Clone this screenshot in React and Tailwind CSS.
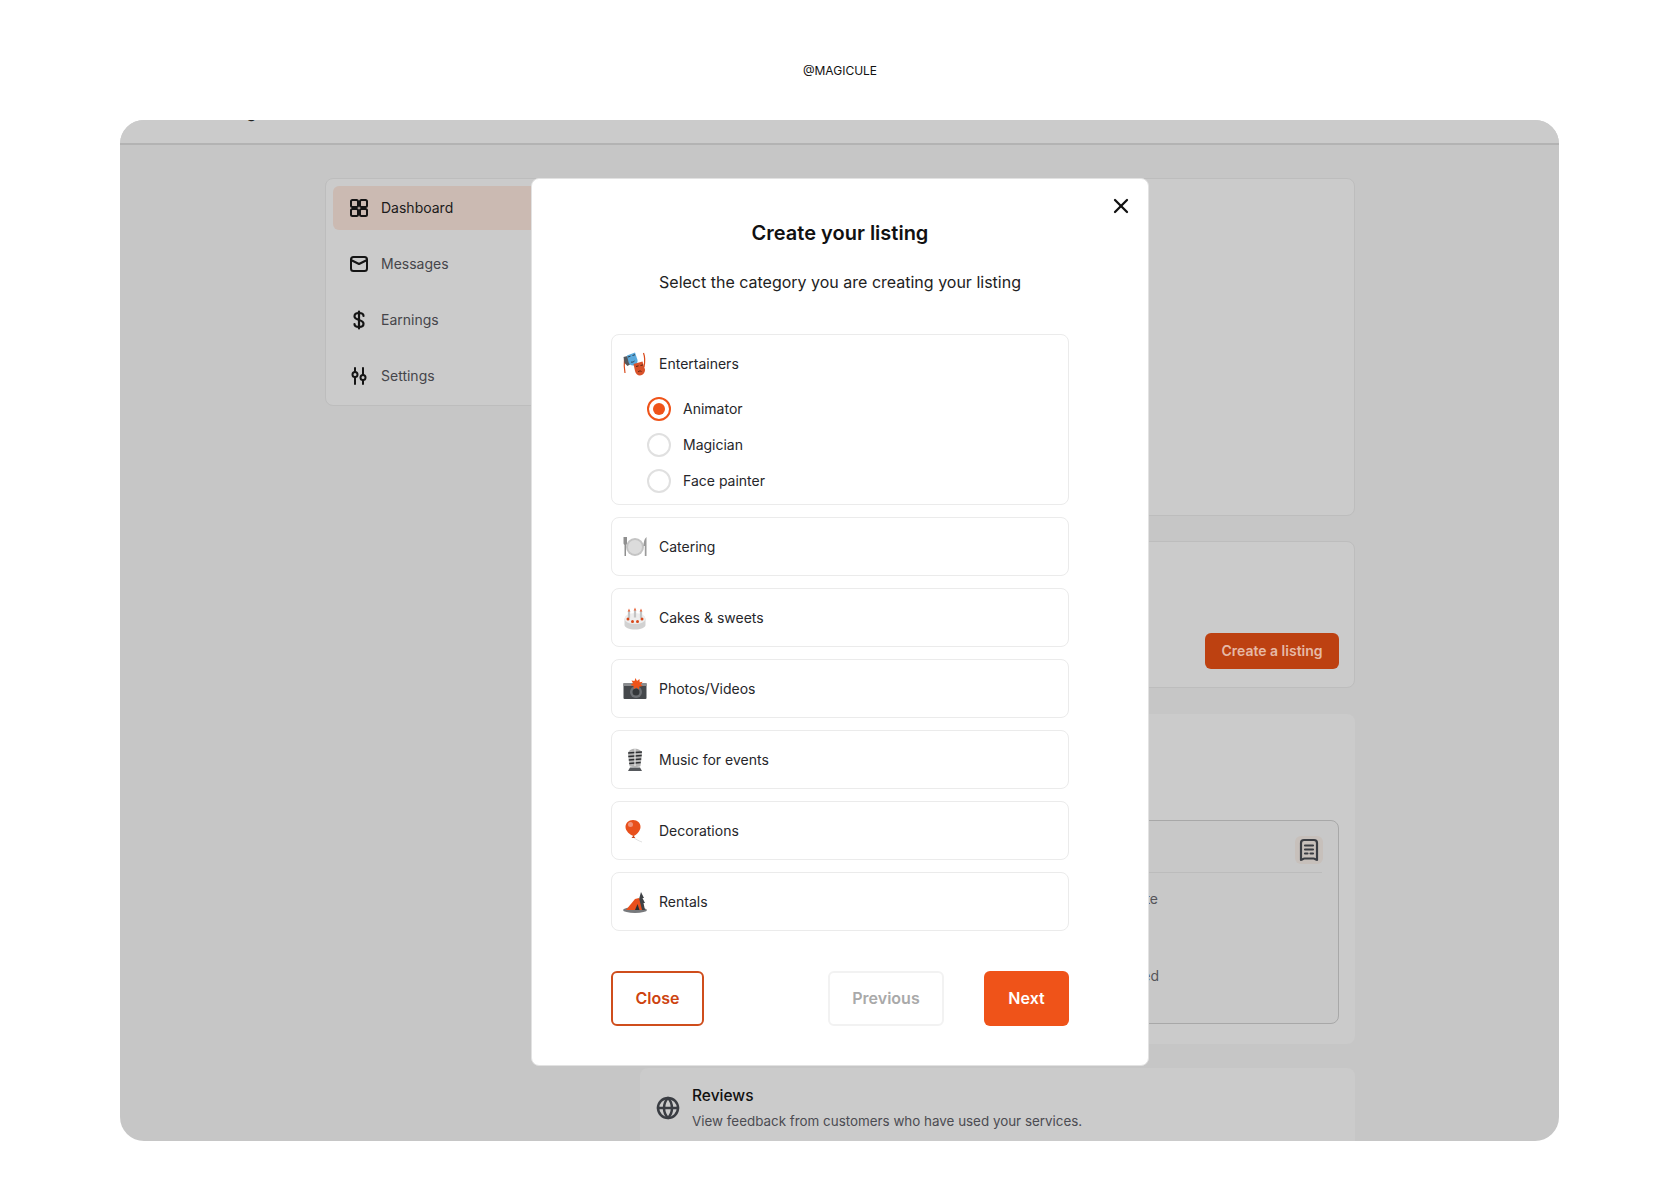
import { Globe, X } from 'lucide-react';

const font = { fontFamily: 'Inter, "Noto Sans", sans-serif' };

function GridIcon() {
  return (
    <svg width="24" height="24" viewBox="0 0 24 24" fill="none" stroke="#151515" strokeWidth="2">
      <rect x="4" y="4" width="7" height="7" rx="1.5" />
      <rect x="13" y="4" width="7" height="7" rx="1.5" />
      <rect x="4" y="13" width="7" height="7" rx="1.5" />
      <rect x="13" y="13" width="7" height="7" rx="1.5" />
    </svg>
  );
}

function MailIcon() {
  return (
    <svg width="24" height="24" viewBox="0 0 24 24" fill="none" stroke="#151515" strokeWidth="2" strokeLinejoin="round" strokeLinecap="round">
      <rect x="4" y="5" width="16" height="14" rx="2.5" />
      <path d="M4 8l8 4 8-4" />
    </svg>
  );
}

function DollarIcon() {
  return (
    <svg width="24" height="24" viewBox="0 0 24 24" fill="none" stroke="#151515" strokeWidth="2.2" strokeLinecap="round">
      <path d="M12 3.5v17" />
      <path d="M16.5 8c0-1.8-2-3-4.500-3s-4.500 1.200-4.500 3.300c0 4.700 9 2.700 9 7.400 0 2.100-2 3.300-4.500 3.300s-4.500-1.200-4.500-3" />
    </svg>
  );
}

function SlidersIcon() {
  return (
    <svg width="24" height="24" viewBox="0 0 24 24" fill="none" stroke="#151515" strokeWidth="2" strokeLinecap="round">
      <path d="M8 4v4M8 13v7M16 4v7M16 16v4" />
      <circle cx="8" cy="10.5" r="2.5" />
      <circle cx="16" cy="13.5" r="2.5" />
    </svg>
  );
}

function ReceiptIcon() {
  return (
    <svg width="24" height="24" viewBox="0 0 24 24" fill="none" stroke="#3a3d43" strokeWidth="2.2" strokeLinecap="round" strokeLinejoin="round">
      <path d="M4 5a3 3 0 0 1 3-3h10a3 3 0 0 1 3 3v17c-1 0-2-1.500-3.500-1.500h-9C6 20.500 5 22 4 22z" />
      <path d="M8 7.500h8M8 11.500h8M8 15.500h2.500M13.500 15.500H16" />
    </svg>
  );
}

function Masks() {
  return (
    <svg width="24" height="24" viewBox="0 0 24 24">
      <path d="M1.500 7c-.5 5-.5 9 .5 14" stroke="#d9491a" strokeWidth="1.2" fill="none" />
      <path d="M20.500 1c1.500 4 1.500 9 .5 14" stroke="#d9491a" strokeWidth="1.2" fill="none" />
      <path d="M.5 5l6-1.500 2 8-4 2.500-3-3z" fill="#55585c" />
      <path d="M4 3.500l8-3 2.500 7.500c.5 3.500-2 5.500-4.500 5.500-2.500 0-4-1.500-4.500-3.500z" fill="#5aa9dc" />
      <path d="M5 5l2.500-.8M9.500 3.500l2.500-.8M8 10c1 .5 2.500 0 3.500-1" stroke="#2c3e4c" strokeWidth="1" fill="none" />
      <path d="M10.500 12l9-2.500 2.500 8c.3 3-2.500 6-5 6s-4.500-2-5-4.500z" fill="#d8522a" />
      <path d="M13 14.500l2.500-.6M17.500 13.500l2.500-.6M15 20c1-1.200 2.500-1.300 3.500-.5" stroke="#5a2412" strokeWidth="1" fill="none" />
    </svg>
  );
}

function Plate() {
  return (
    <svg width="24" height="24" viewBox="0 0 24 24">
      <circle cx="12" cy="12" r="9" fill="#c4c4c4" />
      <circle cx="12" cy="12" r="7" fill="#dcdcdc" />
      <path d="M.5 2v6c0 1 .5 1.500 1 2v11h1.500V10c.5-.5 1-1 1-2V2z" fill="#8f8f8f" />
      <path d="M23.500 2c-1.500 1-3 4-3 9h1.300v10h1.700z" fill="#9a9a9a" />
    </svg>
  );
}

function Cake() {
  return (
    <svg width="24" height="24" viewBox="0 0 24 24">
      <path d="M1.500 12.500h21V19c0 2.500-4.700 4.500-10.500 4.500S1.500 21.500 1.500 19z" fill="#d2d2d2" />
      <ellipse cx="12" cy="12.500" rx="10.500" ry="5.500" fill="#eeeeee" />
      <path d="M6 5v7M12 4v7.500M18 5v7" stroke="#c4c4c4" strokeWidth="2.200" />
      <path d="M6 2.500l1.300 3h-2.600zM12 1.500l1.300 3h-2.600zM18 2.500l1.300 3h-2.600z" fill="#e8653a" />
      <circle cx="5" cy="13" r="1.500" fill="#d8481a" />
      <circle cx="9.500" cy="15.500" r="1.500" fill="#d8481a" />
      <circle cx="14.500" cy="15.500" r="1.500" fill="#d8481a" />
      <circle cx="19" cy="13" r="1.500" fill="#d8481a" />
    </svg>
  );
}

function Camera() {
  return (
    <svg width="24" height="24" viewBox="0 0 24 24">
      <rect x="0.500" y="6" width="23" height="16" rx="1" fill="#45484c" />
      <rect x="0.500" y="6" width="23" height="3" fill="#8a8c8f" />
      <circle cx="13" cy="15" r="6" fill="#6d7074" />
      <circle cx="13" cy="15" r="3.500" fill="#34373a" />
      <path d="M12.500 1l1.500 3 2.500-2 .2 3.200 3-.4-2 2.700 2 1.500-3.500.8-.2 2.700-2.500-2-2.500 1.500-.5-3-3-1 2.500-1.800-1.500-2.700 3 .6z" fill="#ef5319" />
    </svg>
  );
}

function Mic() {
  return (
    <svg width="24" height="24" viewBox="0 0 24 24">
      <path d="M5 6c0-7 14-7 14 0l-1.500 12c0 1.500-11 1.500-11 0z" fill="#b5b5b5" />
      <path d="M5.200 5L19 4M5.300 8.500l13.400-1M5.800 12l12.400-1M6.200 15.500l11.500-1" stroke="#2c2e31" strokeWidth="1.400" />
      <path d="M12 1v17" stroke="#e4e4e4" strokeWidth="1.200" />
      <path d="M7 19.500h10l2 3.500H5z" fill="#55585c" />
    </svg>
  );
}

function Balloon() {
  return (
    <svg width="24" height="24" viewBox="0 0 24 24">
      <path d="M10 18c2 2 6 4 9 5" stroke="#d4d4d4" strokeWidth="0.700" fill="none" />
      <path d="M10 1c4.500 0 7.500 3.200 7.500 7S13.500 16 10.500 17C7 16 2.500 12 2.500 8S5.500 1 10 1z" fill="#e8501c" />
      <path d="M10.500 16.500l1.800 2.500H8.500z" fill="#c9441a" />
      <circle cx="7.500" cy="5.500" r="2.500" fill="#f0937a" />
    </svg>
  );
}

function Tent() {
  return (
    <svg width="24" height="24" viewBox="0 0 24 24">
      <ellipse cx="12" cy="20" rx="12" ry="3" fill="#77797c" />
      <path d="M18 2l3 6h-1.500l2.500 5h-1.500l1.500 7H13z" fill="#3f4246" />
      <path d="M3 20l9-11 4-1 3 12z" fill="#e8501c" />
      <path d="M12 20l2.500-6 2 6z" fill="#2c2e31" />
    </svg>
  );
}

function NavItem({ icon, label, active }) {
  return (
    <div className={`flex items-center gap-[10px] h-[44px] pl-[14px] rounded-[6px] ${active ? 'bg-[#cbbab2]' : ''}`}>
      {icon}
      <span className={`text-sm ${active ? 'text-[#1b1b1b]' : 'text-[#45454a]'}`}>{label}</span>
    </div>
  );
}

function CategoryRow({ icon, label }) {
  return (
    <div className="flex items-center gap-3 h-[59px] pl-[11px] border border-[#ebebeb] rounded-lg">
      {icon}
      <span className="text-sm text-[#26262a]">{label}</span>
    </div>
  );
}

function Radio({ label, checked }) {
  return (
    <div className="flex items-center gap-3 h-6">
      <div className={`flex items-center justify-center w-6 h-6 rounded-full border-2 ${checked ? 'border-[#ef5319]' : 'border-[#e0e0e0]'}`}>
        {checked && <div className="w-3 h-3 rounded-full bg-[#ef5319]" />}
      </div>
      <span className="text-sm text-[#26262a]">{label}</span>
    </div>
  );
}

export default function App() {
  return (
    <div className="h-[1204px] bg-white overflow-hidden" style={font}>
      <div className="h-[120px] pt-[63px] text-center text-xs leading-4 text-[#111]">@MAGICULE</div>

      <div className="relative ml-[120px] w-[1439px] h-[1021px] rounded-[24px] bg-[#c6c6c6] overflow-hidden">
        {/* top bar, only the bottom of it is on screen */}
        <div className="h-[25px] bg-[#cbcbcb] border-b-2 border-[#b3b3b3] overflow-hidden">
          <div className="pl-[78px] -mt-[20px] text-base leading-6 text-[#222]">Catalog</div>
        </div>

        <div className="flex items-start gap-6 pl-[205px] pt-[33px]">
          <div className="flex flex-col gap-3 w-[291px] h-[228px] p-[7px] bg-[#cbcbcb] border border-[#bdbdbd] rounded-lg">
            <NavItem active label="Dashboard" icon={<GridIcon />} />
            <NavItem label="Messages" icon={<MailIcon />} />
            <NavItem label="Earnings" icon={<DollarIcon />} />
            <NavItem label="Settings" icon={<SlidersIcon />} />
          </div>

          <div className="flex flex-col w-[715px]">
            <div className="h-[338px] bg-[#cbcbcb] border border-[#bdbdbd] rounded-lg" />

            <div className="flex items-end justify-end h-[147px] mt-[25px] pr-[15px] pb-[18px] bg-[#cbcbcb] border border-[#bdbdbd] rounded-lg">
              <div className="flex items-center justify-center w-[134px] h-9 rounded-[6px] bg-[#bd4111] text-sm font-semibold text-[#e6b9a6]">
                Create a listing
              </div>
            </div>

            <div className="h-[330px] mt-[26px] pt-[106px] px-4 bg-[#cbcbcb] rounded-lg">
              <div className="h-[204px] px-4 bg-[#c8c8c8] border border-[#a8a8a8] rounded-lg">
                <div className="flex items-center justify-end h-[52px] pt-[6px] border-b border-[#bcbcbc]">
                  <div className="flex items-center justify-center w-7 h-7 -mr-[1px] rounded-[6px] bg-[#c7c0bb]">
                    <ReceiptIcon />
                  </div>
                </div>
                <div className="pt-[16px] text-sm leading-5 text-[#55555a]">
                  <div className="w-[485px] text-right">Availability date</div>
                  <div className="w-[486px] mt-[57px] text-right">Listing updated</div>
                </div>
              </div>
            </div>

            <div className="flex items-center gap-3 h-[80px] mt-[24px] pl-4 bg-[#cbcbcb] rounded-lg">
              <Globe size={24} strokeWidth={2.5} color="#3a3d43" />
              <div className="-mt-[2px]">
                <div className="text-[15.5px] leading-6 font-medium text-[#111]">Reviews</div>
                <div className="text-[13.4px] leading-5 mt-[3px] text-[#4c4c52]">View feedback from customers who have used your services.</div>
              </div>
            </div>
          </div>
        </div>

        {/* modal */}
        <div className="absolute left-[411px] top-[58px] w-[618px] h-[888px] px-[79px] pt-[40px] bg-white border border-[#e2e2e2] rounded-lg">
          <button className="absolute right-[15px] top-[15px] text-[#111]">
            <X size={24} strokeWidth={2.25} />
          </button>
          <h2 className="text-xl leading-7 font-semibold text-center text-[#111]">Create your listing</h2>
          <p className="mt-[23px] text-base leading-6 text-center text-[#222]">Select the category you are creating your listing</p>

          <div className="flex flex-col gap-3 mt-[40px]">
            <div className="h-[171px] pl-[11px] border border-[#ebebeb] rounded-lg">
              <div className="flex items-center gap-3 h-[58px]">
                <Masks />
                <span className="text-sm text-[#26262a]">Entertainers</span>
              </div>
              <div className="flex flex-col gap-3 pl-6 mt-1">
                <Radio checked label="Animator" />
                <Radio label="Magician" />
                <Radio label="Face painter" />
              </div>
            </div>
            <CategoryRow icon={<Plate />} label="Catering" />
            <CategoryRow icon={<Cake />} label="Cakes & sweets" />
            <CategoryRow icon={<Camera />} label="Photos/Videos" />
            <CategoryRow icon={<Mic />} label="Music for events" />
            <CategoryRow icon={<Balloon />} label="Decorations" />
            <CategoryRow icon={<Tent />} label="Rentals" />
          </div>

          <div className="flex items-center mt-[40px]">
            <button className="w-[93px] h-[55px] pb-[2px] rounded-[6px] border-2 border-[#cf4d1c] text-base font-semibold text-[#cd4310]">Close</button>
            <button className="w-[116px] h-[55px] pb-[2px] ml-auto rounded-[6px] border-2 border-[#f2f2f2] text-base font-semibold text-[#a9a9a9]">Previous</button>
            <button className="w-[85px] h-[55px] pb-[2px] ml-[40px] rounded-[6px] bg-[#ef5319] text-base font-semibold text-white">Next</button>
          </div>
        </div>
      </div>
    </div>
  );
}
